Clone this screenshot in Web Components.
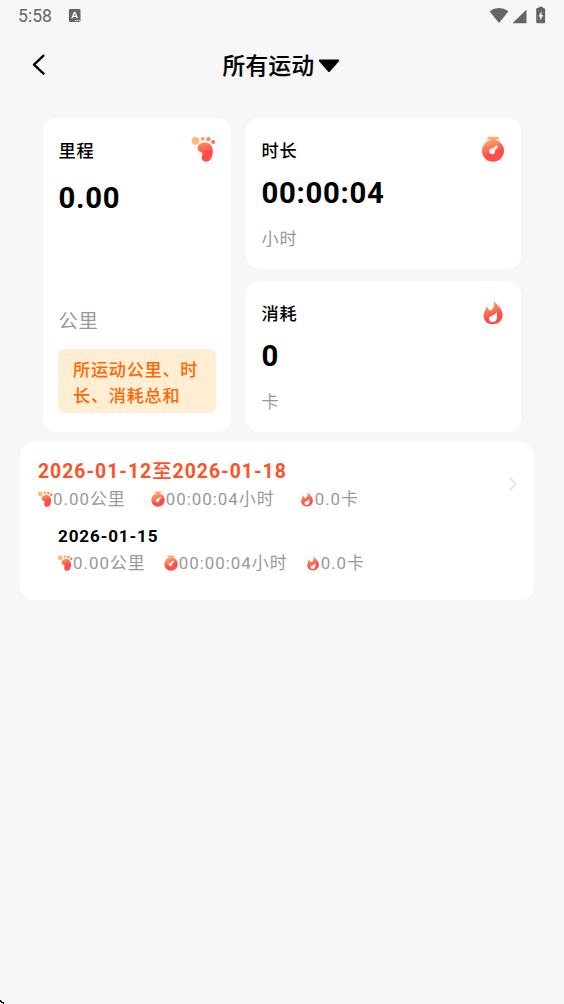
<!DOCTYPE html>
<html lang="zh-CN">
<head>
<meta charset="utf-8">
<title>所有运动</title>
<style>
html,body{margin:0;height:100%;background:#f7f7f7;overflow:hidden}
body{font-family:Roboto,"Noto Sans CJK SC",sans-serif;color:#000}
</style>
</head>
<body>
<sport-page></sport-page>
<script>
const define = (name, html) => {
  const t = document.createElement('template');
  t.innerHTML = html;
  customElements.define(name, class extends HTMLElement {
    constructor() { super(); this.attachShadow({ mode: 'open' }).append(t.content.cloneNode(true)); }
  });
};

const grad = '<defs><linearGradient id="g" gradientUnits="userSpaceOnUse" x1="7" y1="1" x2="15" y2="20"><stop offset="0" stop-color="#ffbd74"/><stop offset=".85" stop-color="#ff4d47"/></linearGradient></defs>';
const ICONS = {
  foot: `<svg viewBox="0 0 26 26">${grad}<g fill="url(#g)" transform="translate(.5 0)"><circle cx="4.900" cy="4.800" r="3.900" fill="#ffba70"/><circle cx="12.200" cy="2.800" r="2" fill="#ffa465"/><circle cx="18" cy="3.200" r="2.100" fill="#ff8a5a"/><circle cx="22.700" cy="6" r="2" fill="#ff6e50"/><path d="M7 12.200C7 8.800 10.400 6.500 14.300 6.500C19 6.500 22.300 9.800 22.300 15.300C22.300 21.500 19.800 25.700 15.700 25.700C12.600 25.700 10.900 23.600 11.200 20.800C11.400 18.900 12.500 18.400 11.900 17.200C11.100 15.600 7 15.600 7 12.200Z"/></g></svg>`,
  watch: `<svg viewBox="0 0 26 26">${grad}<g fill="url(#g)"><rect x="7.200" y=".8" width="11.800" height="2.600" rx="1.300" fill="#ffb070"/><path d="M10.800 2h4.600v3h-4.600z" fill="#ffa56a"/><circle cx="13" cy="14.700" r="11"/></g><circle cx="12.200" cy="15.300" r="2.900" fill="#fff"/><path d="M12.500 14.600L16.600 10.800" stroke="#fff" stroke-width="2.600" stroke-linecap="round"/></svg>`,
  flame: `<svg viewBox="0 0 26 26">${grad}<path fill="url(#g)" d="M13.900 .8C14.500 4.600 22.600 8.300 22.600 16C22.600 21.600 18.500 25.200 13 25.200C7.400 25.200 3.500 21.700 3.500 16.400C3.500 12.600 5.800 9.800 7.200 6.900C7.700 9.900 8.700 11.400 10.400 11.300C13.500 11.100 14.600 6 13.900 .8Z"/><path fill="#fff" d="M16.600 12.700C17.400 17.600 17.700 22.700 12.700 22.900C10.200 23 8.700 21.700 8.900 19.600C9.200 16.200 14.900 17.200 16.600 12.700Z"/></svg>`
};
customElements.define('sport-icon', class extends HTMLElement {
  constructor() { super(); this.attachShadow({ mode: 'open' }); }
  connectedCallback() {
    this.shadowRoot.innerHTML = '<style>:host{display:block;flex:none;width:var(--size,26px);height:var(--size,26px)}svg{display:block;width:100%;height:100%;overflow:visible}</style>' + ICONS[this.getAttribute('name')];
  }
});

define('status-bar', `<style>
:host{display:flex;height:32px;align-items:center;color:#666;font-size:17.600px;line-height:32px;padding:0 18px}
.t{width:50px}.a{margin-right:auto}svg{display:block;flex:none}
</style><span class="t">5:58</span>
<svg class="a" width="14" height="14" viewBox="0 0 14 14"><path fill="#666" fill-rule="evenodd" d="M2.200 0h9a1.300 1.300 0 0 1 1.300 1.300v10.400a1.300 1.300 0 0 1-1.300 1.300h-9A1.300 1.300 0 0 1 .9 11.700V1.300A1.300 1.300 0 0 1 2.200 0zM5.900 2.800L3.200 9.300h1.600l.5-1.400H8l.5 1.400h1.600L7.400 2.800zM6.600 4.600l.9 2.200H5.700z"/><path d="M7 11.600h5" stroke="#f7f7f7" stroke-width="1" stroke-dasharray="1.300 .6"/></svg>
<svg width="57" height="20" viewBox="0 0 57 20" fill="#666"><path d="M.5 5.300Q10-1.200 19.500 5.300L10 17z"/><path d="M23.500 17.300H37.500V3.500z"/><path fill-rule="evenodd" transform="translate(1 0)" d="M48.600 2V.7h4.300V2h1a1.200 1.200 0 0 1 1.200 1.200V16a1.300 1.300 0 0 1-1.200 1.300h-6.400A1.300 1.300 0 0 1 46.200 16V3.200A1.200 1.200 0 0 1 47.400 2zM51.500 5.300L48.500 10.500h1.700v4.100l3-5.500h-1.700z"/></svg>`);

define('nav-bar', `<style>
:host{display:grid;grid-template-columns:222px auto 1fr;height:68px;align-items:center}
.b{margin:-2px 0 0 32px}svg{display:block}
.h{display:flex;align-items:center;gap:4px;font-size:22.600px;font-weight:500;letter-spacing:.4px;line-height:30px}
.h span{padding-top:2px;margin-left:.5px;-webkit-text-stroke:.2px #000}
</style><svg class="b" width="14" height="22" viewBox="0 0 14 22" fill="none" stroke="#000" stroke-width="2.300" stroke-linecap="round" stroke-linejoin="round"><path d="M11.500 1.700L2 10.700L11.500 19.700"/></svg>
<div class="h"><span><slot></slot></span><svg width="22" height="14" viewBox="0 0 22 14"><path d="M1.800 1.500H20.200L11 12Z" stroke="#000" stroke-width="2" stroke-linejoin="round"/></svg></div>`);

define('stat-card', `<style>
:host{display:flex;flex-direction:column;box-sizing:border-box;background:#fff;border-radius:14px;padding:18px 15px 18px 15.500px;letter-spacing:.7px}
.top{display:flex;justify-content:space-between;align-items:flex-start;height:28px}
.l{font-size:17.200px;font-weight:500;line-height:30px}
.v{font-size:29.300px;font-weight:700;line-height:34px;margin-top:var(--value-gap,12px)}
.u{font-size:var(--unit-size,17.200px);color:#999;line-height:28px;margin-top:var(--unit-gap,15px)}
</style><div class="top"><div class="l"><slot name="label"></slot></div><slot name="icon"></slot></div>
<div class="v"><slot name="value"></slot></div><div class="u"><slot name="unit"></slot></div><slot></slot>`);

define('tip-box', `<style>
:host{display:block;box-sizing:border-box;width:158px;height:64px;margin:13px 0 0 -.5px;padding:7.500px 15px 6px;border-radius:7px;background:#ffeed3;color:#f60;font-size:17.150px;font-weight:500;line-height:26px;letter-spacing:.75px}
</style><slot></slot>`);

define('metric-item', `<style>
:host{display:flex;align-items:center;--size:16px;white-space:nowrap}
slot[name]{display:block;margin:0 0 0 -1px}
</style><slot name="icon"></slot><span><slot></slot></span>`);

define('metric-row', `<style>
:host{display:flex;height:28px;align-items:center;color:#999;font-size:16.900px;line-height:28px;letter-spacing:1px;gap:var(--gap,25px)}
</style><slot></slot>`);

define('history-card', `<style>
:host{display:flex;justify-content:space-between;box-sizing:border-box;width:514px;height:158px;margin:10px 0 0 20px;padding:16px 16px 0 18px;border-radius:14px;background:#fff}
.w{color:#ff5126;font-size:19.400px;font-weight:700;line-height:28px;letter-spacing:.99px}
slot[name=total],slot[name=detail]{display:block;margin-top:-1px}
.day{padding-left:20px;margin-top:10px}
.d{font-size:17.100px;font-weight:700;line-height:27px;letter-spacing:.85px}
svg{margin-top:18px}
</style><div><div class="w"><slot name="week"></slot></div><slot name="total"></slot>
<div class="day"><div class="d"><slot name="date"></slot></div><slot name="detail"></slot></div></div>
<svg width="10" height="16" viewBox="0 0 10 16" fill="none" stroke="#e5e5e5" stroke-width="1.900"><path d="M1.500 1.300L8 8L1.500 14.700"/></svg>`);

define('sport-page', `<style>
:host{display:block;width:564px;height:1004px;background:#f7f7f7;position:relative}
.grid{display:grid;grid-template-columns:188px 275px;grid-template-rows:150.500px 151px;gap:12.500px 15px;padding:18px 0 0 43px}
.m{grid-row:1/3;--value-gap:17px;--unit-gap:93px;--unit-size:19.300px}
.r2{--gap:18px}
b{font-weight:500}
.corner{position:absolute;left:0;bottom:0;display:block}
</style>
<status-bar></status-bar><nav-bar>所有运动</nav-bar>
<div class="grid">
<stat-card class="m"><span slot="label">里程</span><sport-icon slot="icon" name="foot"></sport-icon><span slot="value">0.00</span><span slot="unit">公里</span><tip-box>所运动公里、时长、消耗总和</tip-box></stat-card>
<stat-card><span slot="label">时长</span><sport-icon slot="icon" name="watch"></sport-icon><span slot="value">00:00:04</span><span slot="unit">小时</span></stat-card>
<stat-card><span slot="label">消耗</span><sport-icon slot="icon" name="flame"></sport-icon><span slot="value">0</span><span slot="unit">卡</span></stat-card>
</div>
<history-card><span slot="week">2026-01-12<b>至</b>2026-01-18</span>
<metric-row slot="total"><metric-item><sport-icon slot="icon" name="foot"></sport-icon>0.00公里</metric-item><metric-item><sport-icon slot="icon" name="watch"></sport-icon>00:00:04小时</metric-item><metric-item><sport-icon slot="icon" name="flame"></sport-icon>0.0卡</metric-item></metric-row>
<span slot="date">2026-01-15</span>
<metric-row slot="detail" class="r2"><metric-item><sport-icon slot="icon" name="foot"></sport-icon>0.00公里</metric-item><metric-item><sport-icon slot="icon" name="watch"></sport-icon>00:00:04小时</metric-item><metric-item><sport-icon slot="icon" name="flame"></sport-icon>0.0卡</metric-item></metric-row>
</history-card>
<svg class="corner" width="5" height="5" viewBox="0 0 5 5"><path d="M0 1h1v1h1v1h2v2H3V4H1V3H0z"/></svg>`);
</script>
</body>
</html>
